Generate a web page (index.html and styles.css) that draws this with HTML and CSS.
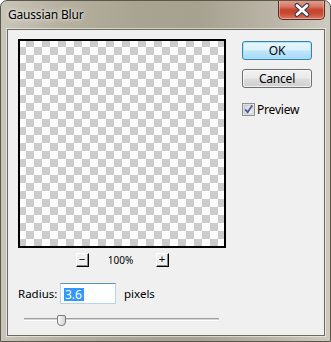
FILE: index.html
```html
<!DOCTYPE html>
<html>
<head>
<meta charset="utf-8">
<link rel="stylesheet" href="styles.css">
</head>
<body>
<div class="window">
  <div class="titlebar">
    <span class="title">Gaussian Blur</span>
    <div class="close">
      <svg width="45" height="18" viewBox="0 0 45 18">
        <path d="M18 4.5 L28 13.5 M28 4.5 L18 13.5" stroke="#3a3f4a" stroke-width="5" stroke-linecap="round"/>
        <path d="M18 4.5 L28 13.5 M28 4.5 L18 13.5" stroke="#ffffff" stroke-width="2.6" stroke-linecap="round"/>
      </svg>
    </div>
  </div>
  <div class="client">
    <div class="top">
      <div class="left">
        <div class="preview"></div>
        <div class="zoomrow">
          <div class="zbtn">−</div>
          <span class="pct">100%</span>
          <div class="zbtn">+</div>
        </div>
      </div>
      <div class="buttons">
        <div class="btn btn-default">OK</div>
        <div class="btn">Cancel</div>
        <div class="check">
          <svg class="box" width="13" height="13" viewBox="0 0 13 13">
            <defs>
              <linearGradient id="cb" x1="0" y1="0" x2="1" y2="1">
                <stop offset="0" stop-color="#d0d3d8"/>
                <stop offset="1" stop-color="#f8f8f8"/>
              </linearGradient>
            </defs>
            <rect x="0.5" y="0.5" width="12" height="12" fill="#f4f4f4" stroke="#8e8f8f"/>
            <rect x="2" y="2" width="9" height="9" fill="url(#cb)" stroke="#a8acb2" stroke-width="0.6"/>
            <path d="M3.2 6.4 L5.6 9.2 L10.2 2.6" fill="none" stroke="#4a5f97" stroke-width="1.8"/>
          </svg>
          <span>Preview</span>
        </div>
      </div>
    </div>
    <div class="radius">
      <span class="lbl">Radius:</span>
      <div class="input"><span class="sel">3.6</span></div>
      <span class="unit">pixels</span>
    </div>
    <div class="slider">
      <div class="track"></div>
      <div class="thumb"></div>
    </div>
  </div>
</div>
</body>
</html>
```

FILE: styles.css
```css
html, body {
  margin: 0;
  padding: 0;
  background: #ffffff;
}

.window {
  width: 331px;
  height: 342px;
  box-sizing: border-box;
  border: 1px solid #5a574d;
  border-radius: 7px 7px 0 0;
  background: linear-gradient(90deg, #c9c5b9 0%, #b6b09f 18%, #a9a391 42%, #a7a18f 60%, #b9b4a6 82%, #cecabf 100%);
  display: flex;
  flex-direction: column;
  font-family: "Noto Sans", "DejaVu Sans", sans-serif;
  font-size: 11px;
  color: #000;
  overflow: hidden;
}

.titlebar {
  height: 28px;
  flex: 0 0 28px;
  display: flex;
  justify-content: space-between;
  align-items: flex-start;
}

.title {
  margin-left: 7px;
  margin-top: 6px;
  line-height: 16px;
  font-size: 12px;
  letter-spacing: -0.2px;
  text-shadow: 0 0 6px rgba(255, 255, 255, 0.9), 0 0 3px rgba(255, 255, 255, 0.7);
}

.close {
  width: 47px;
  height: 20px;
  box-sizing: border-box;
  margin-top: -1px;
  margin-right: 5px;
  border: 1px solid #5c2a22;
  border-top: none;
  border-radius: 0 0 5px 5px;
  background: linear-gradient(180deg, #e4a293 0%, #d77764 35%, #c5432c 52%, #c84a33 72%, #dc7a63 100%);
  box-shadow: inset 0 0 0 1px rgba(255, 220, 210, 0.45);
  display: flex;
  align-items: center;
  justify-content: center;
}

.close svg {
  display: block;
}

.client {
  flex: 0 0 307px;
  height: 307px;
  box-sizing: border-box;
  margin: 0 5px 0 6px;
  border: 1px solid #6d6a5f;
  box-shadow: 0 0 0 1px rgba(255, 255, 255, 0.5);
  background: #f0f0f0;
  padding: 9px 10px 0 10px;
}

.top {
  display: flex;
  align-items: flex-start;
}

.left {
  width: 208px;
}

.preview {
  width: 208px;
  height: 209px;
  box-sizing: border-box;
  border: 2px solid #000;
  background-color: #fff;
  background-image: conic-gradient(#cccccc 0 25%, #ffffff 0 50%, #cccccc 0 75%, #ffffff 0);
  background-size: 16px 16px;
  background-origin: border-box;
}

.zoomrow {
  margin-top: 5px;
  height: 14px;
  display: flex;
  justify-content: center;
  align-items: center;
}

.zbtn {
  width: 13px;
  height: 14px;
  box-sizing: border-box;
  border-top: 1px solid #ffffff;
  border-left: 1px solid #ffffff;
  border-right: 1px solid #000000;
  border-bottom: 1px solid #000000;
  box-shadow: inset -1px -1px 0 #8a8a8a;
  background: #f0f0f0;
  font-family: "Liberation Sans", sans-serif;
  font-size: 11px;
  line-height: 11px;
  text-align: center;
}

.pct {
  width: 67px;
  text-align: center;
  font-size: 10px;
  line-height: 14px;
  padding-right: 3px;
  box-sizing: border-box;
}

.buttons {
  margin-left: 16px;
  padding-top: 2px;
  display: flex;
  flex-direction: column;
}

.btn {
  width: 70px;
  height: 19px;
  box-sizing: border-box;
  border: 1px solid #707070;
  border-radius: 3px;
  background: linear-gradient(180deg, #f2f2f2 0%, #ebebeb 48%, #dddddd 52%, #cfcfcf 100%);
  box-shadow: inset 0 0 0 1px rgba(255, 255, 255, 0.7);
  text-align: center;
  font-size: 12px;
  letter-spacing: -0.2px;
  line-height: 17px;
}

.btn + .btn {
  margin-top: 9px;
}

.btn-default {
  border-color: #3c7fb1;
  background: linear-gradient(180deg, #eaf6fd 0%, #d9f0fc 48%, #bee6fd 52%, #a7d9f5 100%);
  box-shadow: inset 0 0 0 1px rgba(160, 230, 250, 0.9);
}

.check {
  margin-top: 15px;
  display: flex;
  align-items: center;
  gap: 2px;
  font-size: 12px;
  letter-spacing: -0.2px;
  line-height: 13px;
}

.box {
  display: block;
  flex: 0 0 13px;
}

.radius {
  margin-top: 16px;
  display: flex;
  align-items: center;
  height: 21px;
}

.lbl {
  width: 42px;
  font-size: 11.5px;
}

.input {
  width: 56px;
  height: 21px;
  box-sizing: border-box;
  border: 1px solid #b7d5ea;
  border-top-color: #5794bf;
  background: #fff;
  padding: 3px 0 0 3px;
}

.sel {
  display: inline-block;
  background: #3399ff;
  color: #fff;
  font-size: 12px;
  line-height: 13px;
  padding: 0 2px 0 1px;
}

.unit {
  margin-left: 8px;
  font-size: 11.5px;
}

.slider {
  position: relative;
  margin-top: 11px;
  margin-left: 6px;
  width: 195px;
  height: 11px;
}

.track {
  position: absolute;
  left: 0;
  right: 0;
  top: 3px;
  height: 1px;
  background: #d4d4d4;
  border-top: 1px solid #9e9e9e;
  border-bottom: 1px solid #ffffff;
}

.thumb {
  position: absolute;
  left: 33px;
  top: 0;
  width: 9px;
  height: 11px;
  box-sizing: border-box;
  border: 1px solid #7a7a7a;
  border-radius: 2px 2px 4px 4px;
  background: linear-gradient(90deg, #f6f6f6 0%, #e6e6e6 50%, #d2d2d2 100%);
}
```
